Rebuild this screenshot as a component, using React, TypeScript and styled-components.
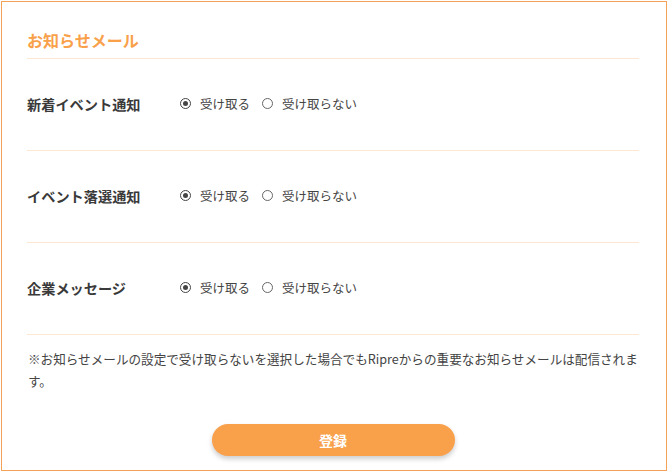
import React, { useState } from 'react';
import styled, { createGlobalStyle } from 'styled-components';

const GlobalStyle = createGlobalStyle`
  body {
    margin: 0;
    padding: 1px;
    background: #fff;
    font-family: "Noto Sans CJK JP", "Noto Sans", sans-serif;
  }
`;

const Card = styled.div`
  box-sizing: border-box;
  width: 666px;
  height: 470px;
  border: 1px solid #f4a25a;
  padding: 25px 27px 0 25px;
  display: flex;
  flex-direction: column;
`;

const Title = styled.h2`
  margin: 0;
  padding: 4px 0 9px;
  font-size: 16px;
  font-weight: 700;
  line-height: 18px;
  color: #f9a04b;
  border-bottom: 1px solid #fce7d2;
`;

const Row = styled.div`
  box-sizing: border-box;
  display: flex;
  align-items: center;
  height: 92px;
  padding-bottom: 2px;
  border-bottom: 1px solid #fce7d2;
`;

const Label = styled.div`
  width: 153px;
  font-size: 14.2px;
  font-weight: 700;
  color: #3a3a3a;
`;

const Options = styled.div`
  display: flex;
  align-items: center;
  gap: 12px;
`;

const Option = styled.label`
  display: flex;
  align-items: center;
  gap: 9px;
  font-size: 12.5px;
  color: #444;
  cursor: pointer;
`;

const Circle = styled.span<{ $on: boolean }>`
  box-sizing: border-box;
  width: 11px;
  height: 11px;
  border-radius: 50%;
  border: 1px solid ${(p) => (p.$on ? '#444' : '#666')};
  display: flex;
  align-items: center;
  justify-content: center;
  &::after {
    content: '';
    width: 5px;
    height: 5px;
    border-radius: 50%;
    background: #444;
    display: ${(p) => (p.$on ? 'block' : 'none')};
  }
`;

const Note = styled.p`
  margin: 13px 0 0 1px;
  font-size: 12.6px;
  line-height: 22px;
  color: #444;
`;

const Footer = styled.div`
  display: flex;
  justify-content: center;
  margin-top: 32px;
`;

const SubmitBtn = styled.button`
  width: 243px;
  height: 32px;
  border: none;
  border-radius: 16px;
  background: #f9a04b;
  color: #fff;
  font-family: inherit;
  font-size: 14px;
  font-weight: 700;
  box-shadow: 0 3px 5px rgba(0, 0, 0, 0.2);
  cursor: pointer;
`;

const rows = ['新着イベント通知', 'イベント落選通知', '企業メッセージ'];

const App = () => {
  const [values, setValues] = useState<boolean[]>([true, true, true]);

  const set = (i: number, v: boolean) =>
    setValues((prev) => prev.map((x, j) => (j === i ? v : x)));

  return (
    <>
      <GlobalStyle />
      <Card>
        <Title>お知らせメール</Title>
        {rows.map((label, i) => (
          <Row key={label}>
            <Label>{label}</Label>
            <Options>
              <Option onClick={() => set(i, true)}>
                <Circle $on={values[i]} />
                受け取る
              </Option>
              <Option onClick={() => set(i, false)}>
                <Circle $on={!values[i]} />
                受け取らない
              </Option>
            </Options>
          </Row>
        ))}
        <Note>
          ※お知らせメールの設定で受け取らないを選択した場合でもRipreからの重要なお知らせメールは配信されます。
        </Note>
        <Footer>
          <SubmitBtn>登録</SubmitBtn>
        </Footer>
      </Card>
    </>
  );
};

export default App;
